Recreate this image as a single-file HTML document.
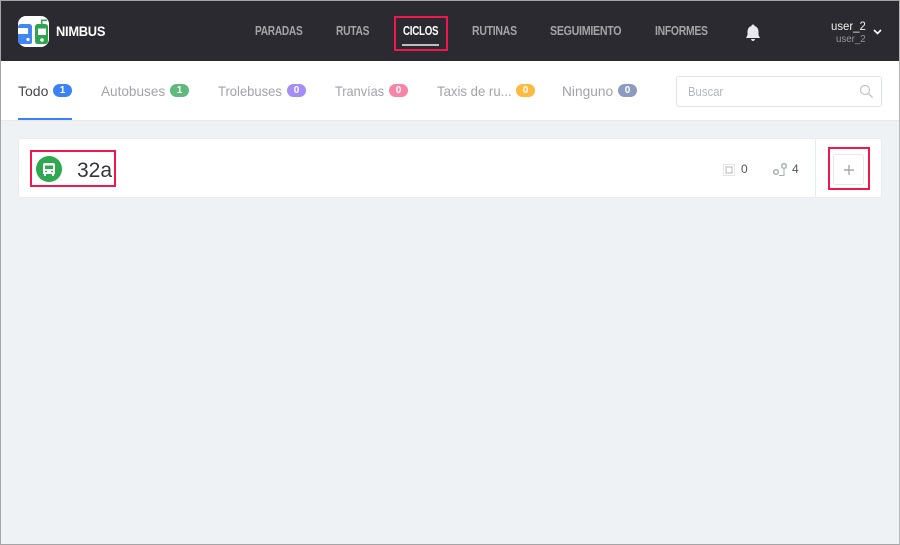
<!DOCTYPE html>
<html><head><meta charset="utf-8"><style>
*{box-sizing:border-box}
html,body{margin:0;padding:0}
body{width:900px;height:545px;position:relative;overflow:hidden;background:#eff2f5;font-family:"Liberation Sans",sans-serif}
.a{position:absolute;white-space:nowrap;transform-origin:0 50%}
.frame{position:absolute;left:0;top:0;width:900px;height:545px;border:1px solid #a5a5a5;border-right-color:#b5b5b5;pointer-events:none}
.n{top:24px;font-size:13px;line-height:14px;font-weight:bold;color:#a3a3a8;letter-spacing:-.35px}
.t{top:83px;font-size:14px;line-height:16px;color:#a2a2aa}
.b{top:84px;height:13px;width:19px;border-radius:7px;color:#fff;font-size:10px;font-weight:bold;line-height:13px;text-align:center}
.red{position:absolute;border:2px solid #f0174f}
</style></head><body>
<div class="a" style="left:1px;top:1px;width:898px;height:60px;background:#2b2a30"></div>
<svg class="a" style="left:18px;top:16px" width="31" height="31" viewBox="0 0 31 31">
<rect width="31" height="31" rx="8" fill="#fff"/>
<path d="M0 12Q0 8 3 8H11Q14 8 14 11V26Q14 28 12 28H3Q0 28 0 25Z" fill="#4285f4"/>
<path d="M0 12H10V18H0Z" fill="#fff"/><circle cx="10" cy="23.500" r="1.600" fill="#fff"/>
<path d="M17 11Q17 8 20 8H23V3.500H29V5H24.500V8H27Q30 8 30 11V25Q30 28 27 28H20Q17 28 17 25Z" fill="#2ea44f"/>
<path d="M20 12.500H28V19H20Z" fill="#fff"/><circle cx="24" cy="24" r="1.800" fill="#fff"/>
</svg>
<div class="a" style="left:56px;top:23px;font-size:14px;line-height:16px;font-weight:bold;color:#fff;letter-spacing:-.3px;transform:scaleX(.92)">NIMBUS</div>

<div class="a n" style="left:255px;transform:scaleX(.78)">PARADAS</div>
<div class="a n" style="left:336px;transform:scaleX(.79)">RUTAS</div>
<div class="a n" style="left:403px;color:#fff;transform:scaleX(.75)">CICLOS</div>
<div class="a" style="left:402px;top:44px;width:37px;height:2px;background:#bdbdc0"></div>
<div class="a n" style="left:472px;transform:scaleX(.81)">RUTINAS</div>
<div class="a n" style="left:550px;transform:scaleX(.82)">SEGUIMIENTO</div>
<div class="a n" style="left:655px;transform:scaleX(.80)">INFORMES</div>
<svg class="a" style="left:745px;top:24px" width="16" height="18" viewBox="0 0 16 18"><path d="M8 0.500Q9.500 .5 9.500 2Q13.500 3 13.500 8V11L15 14H1L2.500 11V8Q2.500 3 6.500 2Q6.500 .5 8 .5Z" fill="#e9e9ea"/><path d="M6 15H10Q9.500 17 8 17T6 15Z" fill="#e9e9ea"/></svg>
<div class="a" style="left:831px;top:19px;font-size:12px;line-height:14px;color:#f0f0f0;transform:scaleX(.95)">user_2</div>
<div class="a" style="left:836px;top:34px;font-size:10px;line-height:11px;color:#96969b;transform:scaleX(.97)">user_2</div>
<svg class="a" style="left:873px;top:29px" width="9" height="6" viewBox="0 0 9 6"><path d="M1 1L4.500 4.500L8 1" fill="none" stroke="#fff" stroke-width="1.600"/></svg>

<div class="a" style="left:1px;top:61px;width:898px;height:60px;background:#fff;border-bottom:1px solid #e6e9ee"></div>
<div class="a t" style="left:18px;color:#46464e">Todo</div>
<div class="a b" style="left:53px;background:#3b82f6">1</div>
<div class="a" style="left:18px;top:118px;width:54px;height:2px;background:#3b82f6"></div>
<div class="a t" style="left:101px;transform:scaleX(.97)">Autobuses</div>
<div class="a b" style="left:170px;background:#5fba7d">1</div>
<div class="a t" style="left:218px;transform:scaleX(.93)">Trolebuses</div>
<div class="a b" style="left:287px;background:#a48ef5">0</div>
<div class="a t" style="left:335px;transform:scaleX(.91)">Tranvías</div>
<div class="a b" style="left:389px;background:#f685a8">0</div>
<div class="a t" style="left:437px;transform:scaleX(.94)">Taxis de ru...</div>
<div class="a b" style="left:516px;background:#fdb940">0</div>
<div class="a t" style="left:562px;transform:scaleX(.98)">Ninguno</div>
<div class="a b" style="left:618px;background:#8e9bc1">0</div>
<div class="a" style="left:676px;top:76px;width:206px;height:31px;background:#fff;border:1px solid #dfe2e8;border-radius:3px"></div>
<div class="a" style="left:688px;top:85px;font-size:13px;line-height:14px;color:#b4b6bd;transform:scaleX(.87)">Buscar</div>
<svg class="a" style="left:859px;top:84px" width="15" height="15" viewBox="0 0 15 15"><circle cx="6" cy="6" r="4.500" fill="none" stroke="#c0c3c9" stroke-width="1.200"/><path d="M9.500 9.500L13.500 13.500" stroke="#c0c3c9" stroke-width="1.400"/></svg>

<div class="a" style="left:18px;top:138px;width:864px;height:60px;background:#fff;border:1px solid #e8ebef;border-radius:3px"></div>
<div class="a" style="left:815px;top:139px;width:1px;height:58px;background:#e8ebef"></div>
<svg class="a" style="left:36px;top:156px" width="26" height="26" viewBox="0 0 26 26"><circle cx="13" cy="13" r="13" fill="#2fa84f"/><path d="M9 7H17Q19 7 19 9V18H18V20H16V18H10V20H8V18H7V9Q7 7 9 7Z" fill="#fff"/><path d="M9 9.500H17V13H9Z" fill="#2fa84f"/><path d="M9 15.500H11M15 15.500H17" stroke="#2fa84f" stroke-width="1.200"/></svg>
<div class="a" style="left:77px;top:159px;font-size:21px;line-height:24px;color:#34343c">32a</div>
<svg class="a" style="left:723px;top:164px" width="12" height="12" viewBox="0 0 12 12"><rect x=".5" y=".5" width="11" height="11" fill="none" stroke="#c9ccd3" stroke-dasharray="1 1"/><rect x="3" y="3" width="6" height="6" fill="none" stroke="#b5b8c0"/></svg>
<div class="a" style="left:741px;top:163px;font-size:12px;line-height:13px;color:#55555c">0</div>
<svg class="a" style="left:773px;top:163px" width="15" height="14" viewBox="0 0 15 14"><circle cx="3" cy="9" r="2.300" fill="#fff" stroke="#a9adb6" stroke-width="1.500"/><circle cx="11" cy="3" r="2.300" fill="#fff" stroke="#a9adb6" stroke-width="1.500"/><path d="M11 6V12.500H6" fill="none" stroke="#a9adb6" stroke-width="1"/></svg>
<div class="a" style="left:792px;top:163px;font-size:12px;line-height:13px;color:#55555c">4</div>
<div class="a" style="left:833px;top:154px;width:31px;height:31px;background:#fff;border:1px solid #e6e8ec;border-radius:3px"></div>
<svg class="a" style="left:844px;top:165px" width="10" height="10" viewBox="0 0 10 10"><path d="M5 0V10M0 5H10" stroke="#a6a9b2" stroke-width="1.400"/></svg>

<div class="red" style="left:394px;top:16px;width:54px;height:35px"></div>
<div class="red" style="left:30px;top:150px;width:86px;height:37px"></div>
<div class="red" style="left:828px;top:147px;width:42px;height:43px"></div>
<div class="frame"></div>
</body></html>
